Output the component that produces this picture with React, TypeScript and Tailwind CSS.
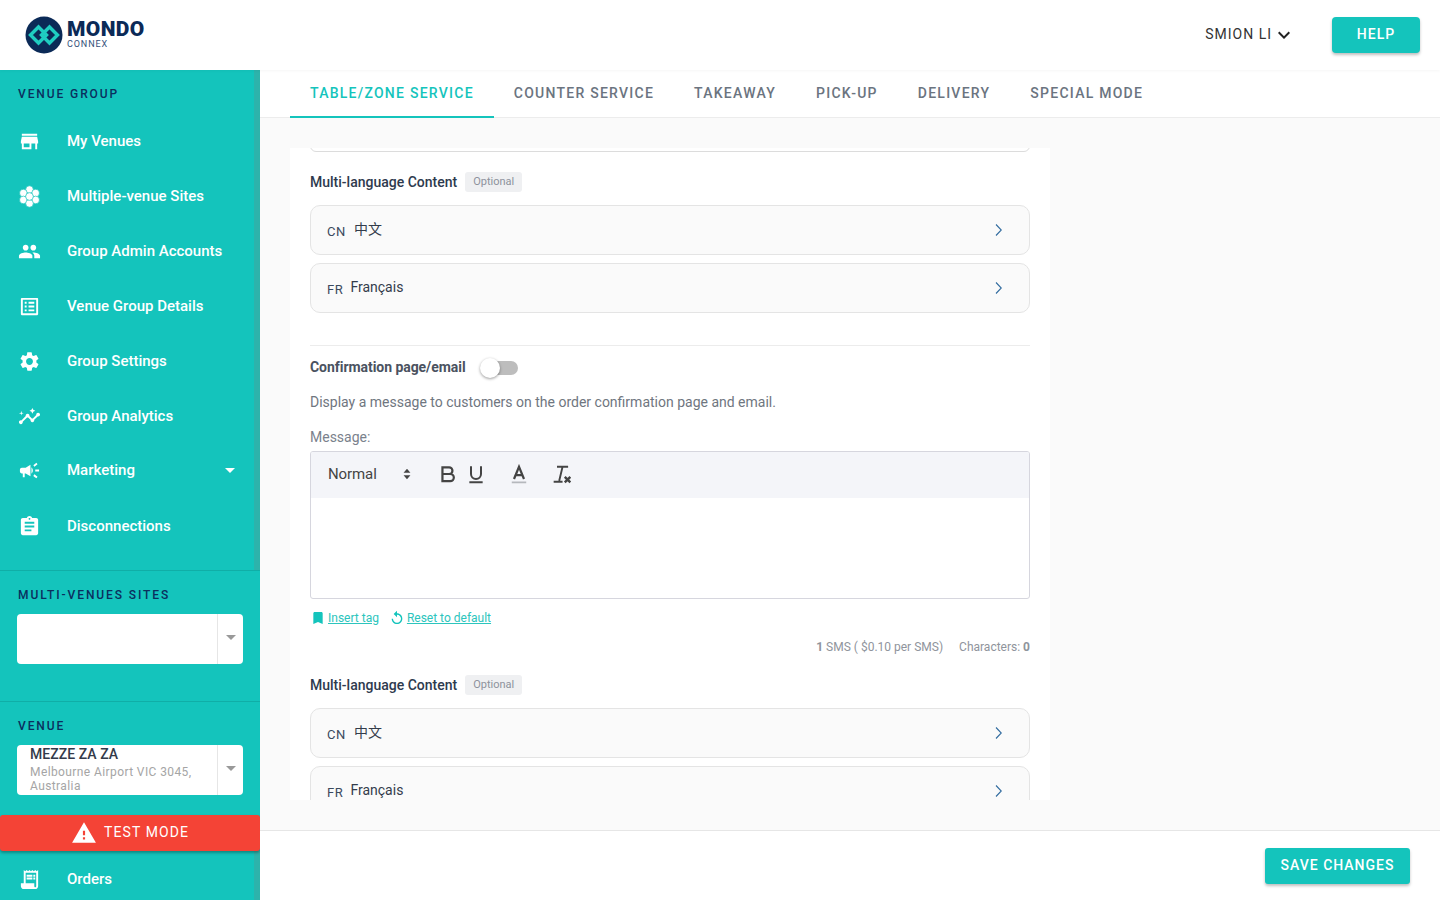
import type { ReactNode } from "react";
import { IconType } from "react-icons";
import {
  MdAssignment,
  MdBookmark,
  MdCampaign,
  MdInsights,
  MdKeyboardArrowDown,
  MdListAlt,
  MdPeople,
  MdReceiptLong,
  MdReplay,
  MdSettings,
  MdStore,
  MdWarning,
} from "react-icons/md";

function HexFlower({ className }: { className?: string }) {
  return (
    <svg viewBox="0 0 24 24" className={className} fill="currentColor" stroke="#14c4bc" strokeWidth="0.7">
      <circle cx="12" cy="4.8" r="4" />
      <circle cx="5.600" cy="8.400" r="4" />
      <circle cx="18.400" cy="8.400" r="4" />
      <circle cx="5.600" cy="15.600" r="4" />
      <circle cx="18.400" cy="15.600" r="4" />
      <circle cx="12" cy="19.200" r="4" />
      <circle cx="12" cy="12" r="4" />
    </svg>
  );
}

type NavItem = { label: string; icon: IconType | typeof HexFlower; caret?: boolean; className: string };

const navItems: NavItem[] = [
  { label: "My Venues", icon: MdStore, className: "h-[55px]" },
  { label: "Multiple-venue Sites", icon: HexFlower, className: "h-[55px]" },
  { label: "Group Admin Accounts", icon: MdPeople, className: "h-[55px]" },
  { label: "Venue Group Details", icon: MdListAlt, className: "h-[55px]" },
  { label: "Group Settings", icon: MdSettings, className: "h-[55px]" },
  { label: "Group Analytics", icon: MdInsights, className: "h-[55px]" },
  { label: "Marketing", icon: MdCampaign, caret: true, className: "h-[55px] pb-[2px]" },
  { label: "Disconnections", icon: MdAssignment, className: "h-[55px]" },
];

const tabs = ["TABLE/ZONE SERVICE", "COUNTER SERVICE", "TAKEAWAY", "PICK-UP", "DELIVERY", "SPECIAL MODE"];

function SideLabel({ children }: { children: ReactNode }) {
  return <div className="pl-[18px] text-[12px] leading-[14px] font-medium tracking-[1.9px] text-[#0b2f5e]">{children}</div>;
}

function NavRow({ item }: { item: NavItem }) {
  const Icon = item.icon;
  return (
    <div className={`flex shrink-0 items-center pl-[18px] pr-[25px] ${item.className}`}>
      <Icon className="h-[23px] w-[23px] text-white" />
      <span className="ml-[26px] text-[15px] font-medium text-white">{item.label}</span>
      {item.caret && <span className="ml-auto h-0 w-0 border-x-[5px] border-t-[5px] border-x-transparent border-t-white" />}
    </div>
  );
}

function SelectBox({ children }: { children?: ReactNode }) {
  return (
    <div className="ml-[17px] flex h-[50px] w-[226px] overflow-hidden rounded-[4px] bg-white">
      <div className="min-w-0 flex-1">{children}</div>
      <div className="flex w-[26px] items-center justify-center border-l border-[#e6e6e6] pb-[4px]">
        <span className="h-0 w-0 border-x-[5px] border-t-[5px] border-x-transparent border-t-[#999999]" />
      </div>
    </div>
  );
}

function LangRow({ code, name, codeGap }: { code: string; name: string; codeGap: string }) {
  return (
    <div className="flex h-[50px] items-center rounded-[10px] border border-[#e4e4e4] bg-[#fafafa] pl-[16px] pr-[27px]">
      <span className="pt-[3px] text-[13px] tracking-[0.6px] text-[#3b4a5e]">{code}</span>
      <span className={`${codeGap} pb-[1px] text-[14px] text-[#333c4b]`}>{name}</span>
      <svg viewBox="0 0 7 12" className="ml-auto mb-[1px] h-[12px] w-[7px]" fill="none" stroke="#2f6a9e" strokeWidth="1.100">
        <path d="M1 0.500 6.300 6 1 11.500" />
      </svg>
    </div>
  );
}

function MultiLanguage() {
  return (
    <>
      <div className="flex h-[20px] items-center">
        <span className="text-[14px] font-medium text-[#2e3a4e]">Multi-language Content</span>
        <span className="ml-[8px] flex h-[20px] w-[57px] items-center justify-center rounded-[3px] bg-[#eff0f2] text-[11px] text-[#8d929c]">
          Optional
        </span>
      </div>
      <div className="mt-[13px] flex flex-col gap-[8px]">
        <LangRow code="CN" name="中文" codeGap="ml-[8px]" />
        <LangRow code="FR" name="Français" codeGap="ml-[7px]" />
      </div>
    </>
  );
}

function Logo() {
  return (
    <div className="ml-[25px] flex items-center">
      <svg viewBox="0 0 38 38" className="h-[38px] w-[38px]">
        <circle cx="19" cy="19" r="18.500" fill="#0b2a57" />
        <path d="M5.500 19 13.500 11 21.500 19 13.500 27Z" fill="none" stroke="#1fcdc1" strokeWidth="3.400" />
        <path d="M16.500 19 24.500 11 32.500 19 24.500 27Z" fill="none" stroke="#1fcdc1" strokeWidth="3.400" />
      </svg>
      <div className="ml-[4px] flex flex-col">
        <span className="text-[21px] leading-[17px] font-black tracking-[0.4px] text-[#0b2a57]">MONDO</span>
        <span className="mt-[2px] text-[9px] leading-[9px] tracking-[0.9px] text-[#33507a]">CONNEX</span>
      </div>
    </div>
  );
}

export default function App() {
  return (
    <div className="flex h-[900px] w-[1440px] flex-col overflow-hidden bg-white font-['Roboto','Noto_Sans_CJK_SC',sans-serif]">
      <header className="z-10 flex h-[70px] shrink-0 items-center bg-white shadow-[0_1px_3px_rgba(0,0,0,0.04)]">
        <Logo />
        <div className="ml-auto flex items-center text-[14px] tracking-[1px] text-[#333333]">
          <span className="pb-[2px]">SMION LI</span>
          <MdKeyboardArrowDown className="h-[24px] w-[24px] text-[#222222]" />
        </div>
        <button className="mr-[20px] ml-[36px] h-[36px] w-[88px] rounded-[4px] bg-[#14c4bc] pb-[2px] text-[14px] font-medium tracking-[1.1px] text-white shadow-[0_2px_3px_rgba(0,0,0,0.25)]">
          HELP
        </button>
      </header>

      <div className="flex min-h-0 flex-1">
        <aside className="flex w-[260px] shrink-0 border-r-[6px] border-[#2db3ab] bg-[#14c4bc]">
          <div className="-mr-[6px] flex w-[260px] shrink-0 flex-col overflow-hidden">
            <div className="shrink-0 pt-[17px] pb-[13px]">
              <SideLabel>VENUE GROUP</SideLabel>
            </div>
            {navItems.map((item) => (
              <NavRow key={item.label} item={item} />
            ))}
            <div className="mt-[16px] shrink-0 border-t border-[#10aea7] bg-[#14c4bc] pt-[17px] pb-[37px]">
              <SideLabel>MULTI-VENUES SITES</SideLabel>
              <div className="mt-[12px]">
                <SelectBox />
              </div>
            </div>
            <div className="shrink-0 border-t border-[#10aea7] bg-[#14c4bc] pt-[17px] pb-[20px]">
              <SideLabel>VENUE</SideLabel>
              <div className="mt-[12px]">
                <SelectBox>
                  <div className="pl-[13px]">
                    <div className="text-[14px] leading-[18px] font-medium tracking-[0.05px] text-[#333a4a]">MEZZE ZA ZA</div>
                    <div className="mt-[2px] text-[12px] leading-[14px] tracking-[0.4px] text-[#a5a5a5]">Melbourne Airport VIC 3045, Australia</div>
                  </div>
                </SelectBox>
              </div>
            </div>
            <div className="z-10 flex h-[36px] shrink-0 items-center justify-center rounded-[3px] bg-[#f44336] pb-[1px] text-[14px] tracking-[1.1px] text-white shadow-[0_2px_3px_rgba(0,0,0,0.3)]">
              <MdWarning className="mr-[7px] h-[26px] w-[26px]" />
              TEST MODE
            </div>
            <div className="flex h-[55px] shrink-0 items-center pt-[1px] pl-[18px]">
              <MdReceiptLong className="h-[23px] w-[23px] text-white" />
              <span className="ml-[26px] text-[15px] font-medium text-white">Orders</span>
            </div>
          </div>
        </aside>

        <main className="flex min-w-0 flex-1 flex-col bg-[#fafafa]">
          <nav className="flex h-[48px] shrink-0 border-b border-[#ececec] bg-white pl-[30px]">
            {tabs.map((tab, i) => (
              <div
                key={tab}
                className={
                  i === 0
                    ? "flex h-[48px] items-center border-b-2 border-[#14c4bc] px-[20px] text-[14px] font-medium tracking-[1.25px] text-[#14c4bc]"
                    : "flex h-[48px] items-center border-b-2 border-transparent px-[20px] text-[14px] font-medium tracking-[1.25px] text-[#6b7480]"
                }
              >
                {tab}
              </div>
            ))}
          </nav>

          <div className="min-h-0 flex-1 px-[30px] pt-[30px] pb-[30px]">
            <div className="h-[652px] w-[760px] overflow-hidden bg-white px-[20px]">
              <div className="-mt-[46px] h-[50px] rounded-[6px] border border-[#dcdcdc] bg-white" />
              <div className="mt-[20px]">
                <MultiLanguage />
              </div>

              <div className="mt-[32px] border-t border-[#ececec] pt-[11px]">
                <div className="flex h-[21px] items-center">
                  <span className="text-[14px] font-bold tracking-[-0.05px] text-[#4a5260]">Confirmation page/email</span>
                  <span className="relative ml-[14px] h-[14px] w-[38px]">
                    <span className="absolute top-0 left-[2px] h-[14px] w-[36px] rounded-full bg-[#bdbdbd]" />
                    <span className="absolute -top-[3px] left-0 h-[20px] w-[20px] rounded-full bg-white shadow-[0_1px_3px_rgba(0,0,0,0.4)]" />
                  </span>
                </div>
                <p className="mt-[14px] text-[14px] leading-[20px] text-[#6f7680]">
                  Display a message to customers on the order confirmation page and email.
                </p>
                <div className="mt-[15px] text-[14px] leading-[20px] text-[#7a818c]">Message:</div>
              </div>

              <div className="mt-[4px] h-[148px] overflow-hidden rounded-[3px] border border-[#d6d6de]">
                <div className="flex h-[46px] items-center bg-[#f4f5f9] pb-[2px] pl-[17px] text-[#444444]">
                  <span className="text-[15px] tracking-[-0.1px]">Normal</span>
                  <svg viewBox="0 0 10 14" className="ml-[25px] h-[12px] w-[10px]" fill="#444444">
                    <path d="M5 1 9 5.500H1ZM5 13 1 8.500H9Z" />
                  </svg>
                  <svg viewBox="0 0 18 18" className="ml-[26px] h-[20px] w-[20px]" fill="none" stroke="#444444" strokeWidth="2">
                    <path d="M4 3h6a3 3 0 0 1 0 6H4Zm0 6h7a3.200 3.200 0 0 1 0 6.500H4Z" />
                  </svg>
                  <svg viewBox="0 0 18 18" className="ml-[8px] h-[20px] w-[20px]" fill="none" stroke="#444444" strokeWidth="1.800">
                    <path d="M4.500 2v7a4.500 4.500 0 0 0 9 0V2M3 16.500h12" />
                  </svg>
                  <svg viewBox="0 0 18 18" className="ml-[23px] h-[20px] w-[20px]" fill="none">
                    <path d="M4.500 13.500 9 2.500l4.500 11M6 10h6" stroke="#444444" strokeWidth="2" />
                    <path d="M2.500 16.500h13" stroke="#b5b8bd" strokeWidth="1.600" />
                  </svg>
                  <svg viewBox="0 0 18 18" className="ml-[23px] h-[20px] w-[20px]" fill="none" stroke="#444444">
                    <path d="M4.500 2.500h10M9.500 2.500 6.500 15M1.500 16h8" strokeWidth="1.700" />
                    <path d="M11.500 11.500l5 5M16.500 11.500l-5 5" strokeWidth="2.200" />
                  </svg>
                </div>
              </div>

              <div className="mt-[11px] flex h-[16px] items-center text-[12px] text-[#2cc5bd]">
                <MdBookmark className="h-[16px] w-[16px] text-[#14c4bc]" />
                <span className="ml-[2px] underline">Insert tag</span>
                <MdReplay className="ml-[10px] h-[16px] w-[16px] text-[#14c4bc]" />
                <span className="ml-[2px] underline">Reset to default</span>
              </div>

              <div className="mt-[13px] flex h-[16px] items-center justify-end text-[12px] text-[#8f949c]">
                <span><b className="font-bold">1</b> SMS ( $0.10 per SMS)</span>
                <span className="ml-[16px]">Characters: <b className="font-bold">0</b></span>
              </div>

              <div className="mt-[20px]">
                <MultiLanguage />
              </div>
            </div>
          </div>

          <footer className="flex h-[70px] shrink-0 items-center justify-end border-t border-[#e6e6e6] bg-white pr-[30px]">
            <button className="h-[36px] w-[145px] rounded-[3px] bg-[#14c4bc] text-[14px] font-medium tracking-[1px] text-white shadow-[0_2px_3px_rgba(0,0,0,0.25)]">
              SAVE CHANGES
            </button>
          </footer>
        </main>
      </div>
    </div>
  );
}
